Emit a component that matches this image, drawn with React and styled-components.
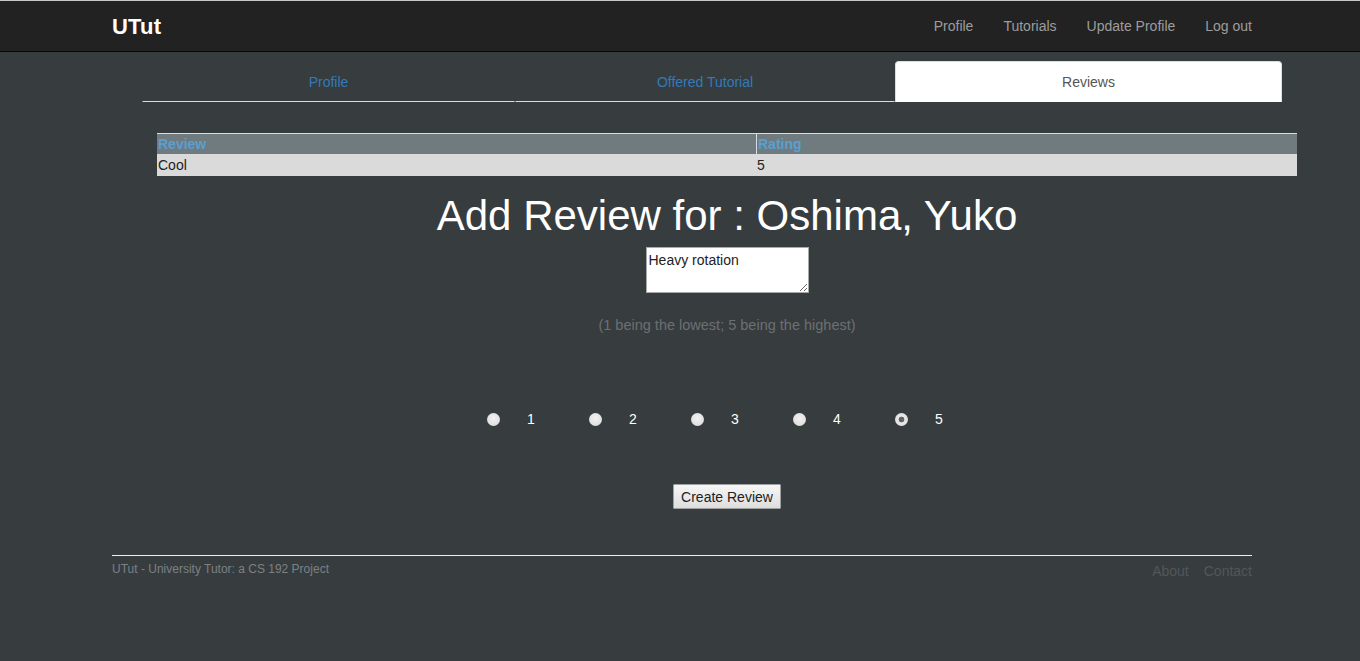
import React from "react";
import styled, { createGlobalStyle } from "styled-components";

const Global = createGlobalStyle`
  html, body { margin: 0; padding: 0; }
  body {
    background: #373c3f;
    font-family: "Liberation Sans", Arial, sans-serif;
    font-size: 14px;
    line-height: 1.42857;
    color: #333;
  }
`;

const Navbar = styled.header`
  border-top: 1px solid #c8c8c8;
  border-bottom: 1px solid #080808;
  background: #222;
  height: 50px;
`;

const NavInner = styled.div`
  width: 1140px;
  margin-left: calc(50% - 568px);
  height: 100%;
  box-sizing: border-box;
  padding-top: 2px;
  display: flex;
  align-items: center;
  justify-content: space-between;
`;

const Brand = styled.a`
  color: #fff;
  font-size: 22px;
  font-weight: bold;
  letter-spacing: 0.2px;
  text-decoration: none;
`;

const NavLinks = styled.nav`
  display: flex;
  gap: 30px;
`;

const NavLink = styled.a`
  color: #9d9d9d;
  font-size: 14px;
  text-decoration: none;
`;

const Tabs = styled.ul`
  list-style: none;
  margin: 9px 0 0 calc(50% - 538px);
  padding: 0;
  width: 1140px;
  display: flex;
`;

const Tab = styled.li`
  width: ${(p) => p.$w}px;
  box-sizing: border-box;
  height: 41px;
  display: flex;
  align-items: center;
  justify-content: center;
  font-size: 14px;
  color: ${(p) => (p.$active ? "#555" : "#337ab7")};
  background: ${(p) => (p.$active ? "#fff" : "transparent")};
  border: 1px solid ${(p) => (p.$active ? "#ddd" : "transparent")};
  border-bottom: 1px solid ${(p) => (p.$active ? "#fff" : "#ddd")};
  border-radius: ${(p) => (p.$active ? "4px 4px 0 0" : "0")};
  padding-top: 3px;
`;

const Content = styled.main`
  width: 1140px;
  margin-left: calc(50% - 523px);
  display: flex;
  flex-direction: column;
  align-items: center;
`;

const Table = styled.div`
  margin-top: 31px;
  width: 1140px;
  display: grid;
  grid-template-columns: 599px 541px;
  border-top: 1px solid #dcdcdc;
`;

const Th = styled.div`
  background: #6f7b7f;
  color: #5a9fd2;
  font-weight: bold;
  font-size: 14px;
  height: 20px;
  line-height: 20px;
  padding-left: 1px;
  border-left: ${(p) => (p.$divider ? "1px solid #dcdcdc" : "none")};
  box-sizing: border-box;
`;

const Td = styled.div`
  background: #dadada;
  color: #222;
  font-size: 14px;
  height: 22px;
  line-height: 23px;
  padding-left: 1px;
`;

const Heading = styled.h1`
  margin: 17px 0 0;
  font-size: 42px;
  font-weight: normal;
  line-height: 46px;
  color: #fff;
`;

const TextArea = styled.textarea`
  margin-top: 8px;
  width: 163px;
  height: 46px;
  box-sizing: border-box;
  padding: 4px 2px 2px;
  font-family: "Liberation Sans", Arial, sans-serif;
  font-size: 14px;
  line-height: 16px;
  color: #222;
  border: 1px solid #a9a9a9;
  background: #fff;
`;

const Hint = styled.p`
  margin: 22px 0 0;
  font-size: 14.5px;
  line-height: 20px;
  color: #6c7073;
`;

const RadioRow = styled.div`
  margin-top: 74px;
  display: flex;
  height: 20px;
`;

const RadioItem = styled.label`
  width: 102px;
  display: flex;
  align-items: center;
  color: #fff;
  font-size: 14px;
`;

const Radio = styled.input.attrs({ type: "radio", name: "rating" })`
  appearance: none;
  -webkit-appearance: none;
  margin: 0 0 0 15px;
  width: 13px;
  height: 13px;
  border-radius: 50%;
  background: radial-gradient(circle at 50% 40%, #f2f2f2, #d8d8d8);
  border: none;
  &:checked {
    background: radial-gradient(circle, #5f6365 0 2.6px, #e8e8e8 3.2px, #dcdcdc 100%);
  }
`;

const RadioText = styled.span`
  margin-left: 27px;
  padding-top: 1px;
`;

const Button = styled.button`
  margin-top: 55px;
  height: 25px;
  padding: 0 7px;
  font-family: "Liberation Sans", Arial, sans-serif;
  font-size: 14px;
  color: #222;
  background: linear-gradient(#f6f6f6, #dedede);
  border: 1px solid #a0a0a0;
  border-radius: 1px;
`;

const Footer = styled.footer`
  width: 1140px;
  margin: 46px 0 0 calc(50% - 568px);
  border-top: 1px solid #eee;
  display: flex;
  justify-content: space-between;
  align-items: flex-start;
  padding-top: 5px;
`;

const FooterText = styled.p`
  margin: 0;
  font-size: 12px;
  line-height: 17px;
  color: #7c8184;
`;

const FooterLinks = styled.nav`
  display: flex;
  gap: 15px;
`;

const FooterLink = styled.a`
  color: #52575a;
  font-size: 14px;
  line-height: 20px;
  text-decoration: none;
`;

export default function App() {
  return (
    <>
      <Global />
      <Navbar>
        <NavInner>
          <Brand href="#">UTut</Brand>
          <NavLinks>
            <NavLink href="#">Profile</NavLink>
            <NavLink href="#">Tutorials</NavLink>
            <NavLink href="#">Update Profile</NavLink>
            <NavLink href="#">Log out</NavLink>
          </NavLinks>
        </NavInner>
      </Navbar>
      <Tabs>
        <Tab $w={373}>Profile</Tab>
        <Tab $w={380}>Offered Tutorial</Tab>
        <Tab $w={387} $active>Reviews</Tab>
      </Tabs>
      <Content>
        <Table>
          <Th>Review</Th>
          <Th $divider>Rating</Th>
          <Td>Cool</Td>
          <Td>5</Td>
        </Table>
        <Heading>Add Review for : Oshima, Yuko</Heading>
        <TextArea defaultValue="Heavy rotation" />
        <Hint>(1 being the lowest; 5 being the highest)</Hint>
        <RadioRow>
          {[1, 2, 3, 4, 5].map((n) => (
            <RadioItem key={n}>
              <Radio value={n} defaultChecked={n === 5} />
              <RadioText>{n}</RadioText>
            </RadioItem>
          ))}
        </RadioRow>
        <Button>Create Review</Button>
      </Content>
      <Footer>
        <FooterText>UTut - University Tutor: a CS 192 Project</FooterText>
        <FooterLinks>
          <FooterLink href="#">About</FooterLink>
          <FooterLink href="#">Contact</FooterLink>
        </FooterLinks>
      </Footer>
    </>
  );
}
